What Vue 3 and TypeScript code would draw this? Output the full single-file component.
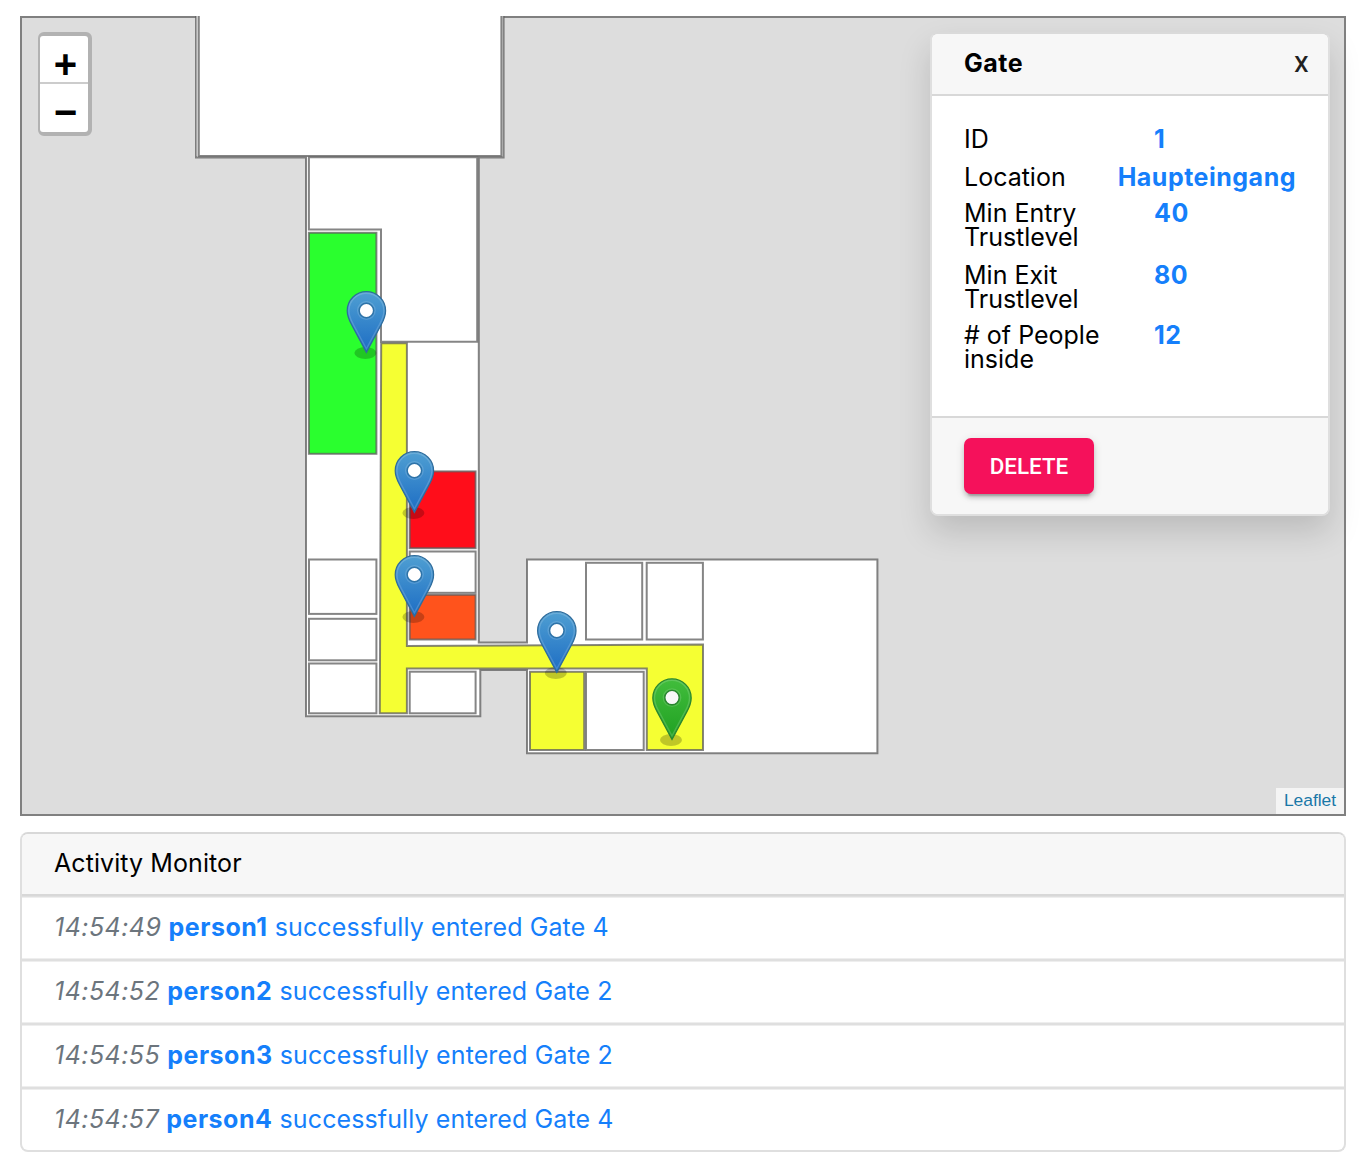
<script setup lang="ts">
interface Room { x: number; y: number; x2: number; y2: number; fill: string }
interface Pin { x: number; y: number; tone: 'blue' | 'green' }
interface Detail { label: string; value: string; kind: string }
interface Activity { time: string; person: string; gate: number }

const white = '#ffffff'
const yellow = '#f5ff33'

const rooms: Room[] = [
  { x: 308.9, y: 232.8, x2: 376.4, y2: 453.8, fill: '#2aff2e' },
  { x: 309, y: 559.5, x2: 376.4, y2: 613.9, fill: white },
  { x: 309, y: 618.8, x2: 376.4, y2: 660.3, fill: white },
  { x: 309, y: 663.5, x2: 376.4, y2: 713.3, fill: white },
  { x: 409.7, y: 471.4, x2: 475.6, y2: 548.2, fill: '#ff0d1a' },
  { x: 409.7, y: 551.5, x2: 475.6, y2: 592.8, fill: white },
  { x: 409.7, y: 594.8, x2: 475.6, y2: 639.5, fill: '#ff531c' },
  { x: 409.7, y: 671.7, x2: 475.6, y2: 713.3, fill: white },
  { x: 586, y: 562.8, x2: 642.2, y2: 639.5, fill: white },
  { x: 646.7, y: 562.8, x2: 702.9, y2: 639.5, fill: white },
  { x: 530, y: 671.8, x2: 584.2, y2: 750, fill: yellow },
  { x: 586, y: 671.8, x2: 643.7, y2: 750, fill: white },
]

const pins: Pin[] = [
  { x: 366.4, y: 291.2, tone: 'blue' },
  { x: 414.4, y: 451.2, tone: 'blue' },
  { x: 414.4, y: 555.2, tone: 'blue' },
  { x: 556.8, y: 611.2, tone: 'blue' },
  { x: 672, y: 678.3, tone: 'green' },
]

const details: Detail[] = [
  { label: 'ID', value: '1', kind: 'number' },
  { label: 'Location', value: 'Haupteingang', kind: 'name' },
  { label: 'Min Entry Trustlevel', value: '40', kind: 'number' },
  { label: 'Min Exit Trustlevel', value: '80', kind: 'number' },
  { label: '# of People inside', value: '12', kind: 'number' },
]

const activities: Activity[] = [
  { time: '14:54:49', person: 'person1', gate: 4 },
  { time: '14:54:52', person: 'person2', gate: 2 },
  { time: '14:54:55', person: 'person3', gate: 2 },
  { time: '14:54:57', person: 'person4', gate: 4 },
]
</script>

<template>
  <main class="page">
    <section class="map">
      <svg class="plan" width="1322" height="798" viewBox="22 16 1322 798">
        <defs>
          <linearGradient id="pin-blue" x1="0" y1="0" x2="0" y2="1">
            <stop offset="0" stop-color="#4f9fd2" />
            <stop offset="1" stop-color="#1d6dc4" />
          </linearGradient>
          <linearGradient id="pin-green" x1="0" y1="0" x2="0" y2="1">
            <stop offset="0" stop-color="#42bd3c" />
            <stop offset="1" stop-color="#1fa022" />
          </linearGradient>
        </defs>
        <g class="walls">
          <path fill="#fff" d="M196 0V157.4H306V716.2H480.3V670H527V753.2H877.4V559.6H527V642.6H478.8V157.4H503.6V0Z" />
          <path class="gap" d="M197.4 16V156" />
          <path fill="#fff" d="M198.8 0V156H501.4V0Z" />
          <path fill="#fff" d="M308.9 157.2V229.6H381V341.7H477.2V157.2Z" />
          <path :fill="yellow" d="M381.2 343.2H406.9V646L703 644.6V750H646.8V668.4H406.9V713.3H379.8Z" />
          <rect
            v-for="(r, i) in rooms" :key="i"
            :x="r.x" :y="r.y" :width="r.x2 - r.x" :height="r.y2 - r.y" :fill="r.fill"
          />
        </g>
        <ellipse v-for="(p, i) in pins" :key="'s' + i" :cx="p.x - 1" :cy="p.y + 61.8" rx="11" ry="6" fill="#000" opacity="0.22" />
        <g v-for="(p, i) in pins" :key="'p' + i" :transform="`translate(${p.x} ${p.y})`" :class="['pin', p.tone]">
          <path class="body" d="M0 .5C-10.6 .5-19.2 9-19.2 19.6C-19.2 25.2-17 29.6-14.8 33.6L0 61.2L14.8 33.6C17 29.6 19.2 25.2 19.2 19.6C19.2 9 10.6 .5 0 .5Z" />
          <path class="shine" d="M0 2C-9.8 2-17.5 9.8-17.5 19.6C-17.5 24.8-15.4 29-13.3 32.9L0 57.6L13.3 32.9C15.4 29 17.5 24.8 17.5 19.6C17.5 9.8 9.8 2 0 2Z" />
          <circle class="halo" cy="19.3" r="8.7" />
          <circle class="hole" cy="19.3" r="7.2" />
        </g>
      </svg>

      <div class="zoom">
        <button type="button" class="zoom-btn"><span>+</span></button>
        <button type="button" class="zoom-btn"><span>−</span></button>
      </div>

      <aside class="panel">
        <header class="panel-head">
          <strong>Gate</strong>
          <button type="button" class="close">X</button>
        </header>
        <div class="panel-body">
          <div v-for="d in details" :key="d.label" class="detail">
            <span class="label">{{ d.label }}</span>
            <strong :class="['value', d.kind]">{{ d.value }}</strong>
          </div>
        </div>
        <footer class="panel-foot">
          <button type="button" class="delete">DELETE</button>
        </footer>
      </aside>

      <div class="credit"><a>Leaflet</a></div>
    </section>

    <section class="monitor">
      <header class="monitor-head">Activity Monitor</header>
      <div v-for="a in activities" :key="a.time" class="entry">
        <em>{{ a.time }}</em> <strong>{{ a.person }}</strong> successfully entered Gate {{ a.gate }}
      </div>
    </section>
  </main>
</template>

<style>
body {
  background: #fff;
}
</style>

<style scoped>
.page {
  box-sizing: border-box;
  width: 1364px;
  height: 1166px;
  padding: 16px 18px 0 20px;
  font-family: Inter, "Liberation Sans", sans-serif;
  font-size: 25px;
  color: #000;
}
.page * {
  box-sizing: border-box;
}
button {
  margin: 0;
  padding: 0;
  border: 0;
  background: none;
  font-family: inherit;
}
.map {
  position: relative;
  height: 800px;
  border: 2px solid #808080;
  background: #ddd;
}
.plan {
  display: block;
  margin-top: -2px;
}
.walls {
  stroke: #5c5c5c;
  stroke-opacity: 0.75;
  stroke-width: 2;
}
.walls .gap {
  stroke: #ddd;
  stroke-opacity: 1;
  stroke-width: 1.6;
}
.pin .body {
  stroke-width: 1.2;
}
.pin .shine {
  fill: none;
  stroke: #fff;
  stroke-opacity: 0.16;
  stroke-width: 1.4;
}
.pin .halo {
  fill: none;
  stroke: #fff;
  stroke-opacity: 0.14;
  stroke-width: 1.4;
}
.pin .hole {
  fill: #fff;
  stroke-width: 1.4;
}
.blue .body {
  fill: url(#pin-blue);
  stroke: #2e6c9c;
}
.blue .hole {
  stroke: #2e73a8;
}
.green .body {
  fill: url(#pin-green);
  stroke: #2a8530;
}
.green .hole {
  fill: #f8f8f8;
  stroke: #2a8530;
}
.zoom {
  position: absolute;
  left: 16px;
  top: 14px;
  width: 54px;
  height: 104px;
  border: solid #b2b2b2;
  border-width: 4px 4px 4px 2px;
  border-radius: 6px;
  background: #b2b2b2;
}
.zoom-btn {
  display: flex;
  align-items: center;
  justify-content: center;
  width: 48px;
  height: 46px;
  padding: 10px 0 0 3px;
  border-radius: 3px 3px 0 0;
  background: #fff;
  color: #000;
  font: bold 40px/36px "Liberation Sans", Arial, sans-serif;
}
.zoom-btn + .zoom-btn {
  height: 50px;
  padding-top: 8px;
  border-top: 2px solid #ccc;
  border-radius: 0 0 3px 3px;
}
.panel {
  position: absolute;
  left: 908px;
  top: 14px;
  width: 400px;
  height: 484px;
  display: flex;
  flex-direction: column;
  border: 2px solid #dfdfdf;
  border-top-color: #dadada;
  border-radius: 8px;
  background: #fff;
  box-shadow: 0 16px 32px rgba(0, 0, 0, 0.15);
}
.panel-head {
  display: flex;
  justify-content: space-between;
  height: 62px;
  padding: 0 19.5px 0 32px;
  border-bottom: 2px solid #d8d8d8;
  border-radius: 6px 6px 0 0;
  background: #f7f7f7;
  line-height: 58px;
}
.panel-head strong {
  font-weight: 700;
  letter-spacing: 0.5px;
}
.close {
  font: 500 22.5px/60px Roboto, sans-serif;
  color: #212121;
}
.panel-body {
  flex: 1;
  padding: 31px 32px 0;
  line-height: 24px;
}
.detail {
  display: flex;
  margin-bottom: 14px;
}
.detail:nth-child(even) {
  margin-bottom: 12px;
}
.label {
  flex: 1;
}
.value {
  min-width: 142px;
  font-weight: 700;
  letter-spacing: 0.5px;
  color: #157ffb;
}
.panel-foot {
  height: 98px;
  padding: 20px 32px;
  border-top: 2px solid #d8d8d8;
  border-radius: 0 0 6px 6px;
  background: #f7f7f7;
}
.delete {
  display: block;
  width: 130px;
  height: 56px;
  border-radius: 7px;
  background: #f5115b;
  box-shadow: 0 6px 2px -4px rgba(0, 0, 0, 0.2), 0 4px 4px rgba(0, 0, 0, 0.14), 0 2px 10px rgba(0, 0, 0, 0.12);
  color: #fff;
  font: 500 22.4px/56px Roboto, sans-serif;
}
.credit {
  position: absolute;
  right: 0;
  bottom: 0;
  width: 68px;
  height: 26px;
  background: #f4f4f4;
  text-align: center;
  font: 17.4px/25px "Liberation Sans", Arial, sans-serif;
}
.credit a {
  color: #1a78a8;
}
.monitor {
  height: 320px;
  margin-top: 16px;
  border: 2px solid #dfdfdf;
  border-top-color: #d8d8d8;
  border-radius: 8px;
  overflow: hidden;
}
.monitor-head {
  height: 62px;
  padding-left: 32px;
  border-bottom: 2px solid #d8d8d8;
  background: #f7f7f7;
  line-height: 59px;
  letter-spacing: 0.08px;
}
.entry {
  height: 64px;
  padding-left: 32px;
  border: solid #dfdfdf;
  border-width: 1px 0;
  box-shadow: inset 0 1px #eee, inset 0 -1px #eee;
  line-height: 61px;
  letter-spacing: 0.11px;
  white-space: nowrap;
  color: #157ffb;
}
.entry:last-child {
  border-bottom: 0;
  box-shadow: inset 0 1px #eee;
}
.entry em {
  letter-spacing: 0.46px;
  color: #6c757d;
}
.entry strong {
  font-weight: 700;
  letter-spacing: 0.5px;
}
</style>
